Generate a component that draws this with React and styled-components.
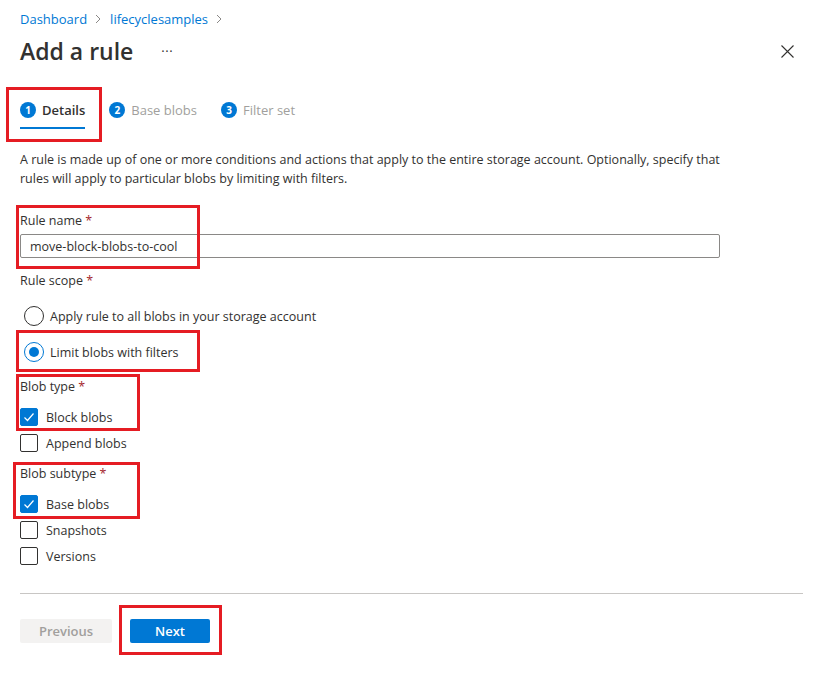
import React from 'react';
import styled, { createGlobalStyle } from 'styled-components';

const GlobalStyle = createGlobalStyle`
  body {
    margin: 0;
    background: #ffffff;
    font-family: "Open Sans", "Noto Sans", sans-serif;
    color: #323130;
  }
`;

const Page = styled.div`
  padding: 11px 20px 30px 20px;
  font-size: 12.5px;
`;

const Breadcrumb = styled.nav`
  display: flex;
  align-items: center;
  height: 16px;
  line-height: 16px;
  font-size: 13px;
`;

const Crumb = styled.a`
  color: #0078d4;
  text-decoration: none;
`;

const Separator = styled.span`
  display: flex;
  margin: 0 9px 0 8px;
`;

const TitleRow = styled.div`
  display: flex;
  align-items: center;
  margin-top: 8px;
  height: 32px;
`;

const Title = styled.h1`
  margin: 0;
  font-size: 23px;
  font-weight: 600;
  line-height: 32px;
`;

const More = styled.span`
  margin-left: 28px;
  font-size: 13px;
  letter-spacing: 0.5px;
`;

const CloseButton = styled.button`
  margin-left: auto;
  margin-right: 9px;
  padding: 0;
  border: none;
  background: none;
  display: flex;
`;

const Tabs = styled.div`
  display: flex;
  gap: 24px;
  margin-top: 31px;
`;

const Tab = styled.div`
  position: relative;
  display: flex;
  align-items: center;
  gap: 6px;
  padding: 2px 0 7px;
  line-height: 20px;
  font-size: 13px;
  font-weight: ${p => (p.$active ? 600 : 400)};
  color: ${p => (p.$active ? '#323130' : '#a19f9d')};
  border-bottom: 2px solid ${p => (p.$active ? '#0078d4' : 'transparent')};
`;

const Step = styled.span`
  width: 16px;
  height: 16px;
  border-radius: 50%;
  background: #0078d4;
  color: #ffffff;
  font-size: 10px;
  font-weight: 700;
  display: flex;
  align-items: center;
  justify-content: center;
  line-height: 1;
`;

const Description = styled.p`
  margin: 21px 0 0;
  line-height: 19px;
  max-width: 712px;
`;

const Marked = styled.div`
  position: relative;
  margin-top: ${p => p.$mt || 0}px;
`;

const Highlight = styled.div`
  position: absolute;
  box-sizing: border-box;
  border: 3px solid #e51c23;
  pointer-events: none;
  left: ${p => p.$x}px;
  top: ${p => p.$y}px;
  width: ${p => p.$w}px;
  height: ${p => p.$h}px;
`;

const Label = styled.div`
  line-height: 18px;
  margin-top: ${p => p.$mt || 0}px;
`;

const Required = styled.span`
  color: #a4262c;
`;

const TextInput = styled.input`
  display: block;
  box-sizing: border-box;
  margin-top: 4px;
  width: 700px;
  height: 24px;
  padding: 0 9px;
  border: 1px solid #8a8886;
  border-radius: 2px;
  font-family: inherit;
  font-size: 12.5px;
  color: #323130;
  outline: none;
`;

const RadioRow = styled.div`
  position: relative;
  display: flex;
  align-items: center;
  gap: 6px;
  height: 20px;
  margin-left: 4px;
  margin-top: ${p => p.$mt || 0}px;
`;

const RadioCircle = styled.span`
  box-sizing: border-box;
  width: 20px;
  height: 20px;
  border-radius: 50%;
  border: 1px solid ${p => (p.$checked ? '#0078d4' : '#323130')};
  display: flex;
  align-items: center;
  justify-content: center;
  &::after {
    content: '';
    width: 10px;
    height: 10px;
    border-radius: 50%;
    background: ${p => (p.$checked ? '#0078d4' : 'transparent')};
  }
`;

const CheckRow = styled.div`
  display: flex;
  align-items: center;
  gap: 8px;
  height: 18px;
  margin-top: ${p => p.$mt || 0}px;
`;

const Box = styled.span`
  box-sizing: border-box;
  width: 18px;
  height: 18px;
  border-radius: 2px;
  border: 1px solid ${p => (p.$checked ? '#0078d4' : '#323130')};
  background: ${p => (p.$checked ? '#0078d4' : '#ffffff')};
  display: flex;
  align-items: center;
  justify-content: center;
`;

const Divider = styled.hr`
  margin: 28px 0 0;
  border: none;
  border-top: 1px solid #c8c6c4;
`;

const Footer = styled.div`
  display: flex;
  gap: 18px;
  margin-top: 25px;
`;

const Button = styled.button`
  height: 24px;
  width: ${p => p.$w}px;
  border: none;
  border-radius: 2px;
  font-family: inherit;
  font-size: 13px;
  font-weight: 600;
  background: ${p => (p.$primary ? '#0078d4' : '#f3f2f1')};
  color: ${p => (p.$primary ? '#ffffff' : '#a19f9d')};
`;

const ButtonSlot = styled.div`
  position: relative;
  display: flex;
`;

const Chevron = () => (
  <Separator>
    <svg width="6" height="10" viewBox="0 0 6 10">
      <path d="M1 1l4 4-4 4" fill="none" stroke="#8a8886" strokeWidth="1" />
    </svg>
  </Separator>
);

const CloseIcon = () => (
  <svg width="13" height="13" viewBox="0 0 13 13">
    <path d="M0.5 0.5l12 12M12.5 0.5l-12 12" stroke="#323130" strokeWidth="1.1" />
  </svg>
);

const CheckMark = () => (
  <svg width="12" height="12" viewBox="0 0 12 12">
    <path d="M1.5 6.5l3 3 6-7" fill="none" stroke="#ffffff" strokeWidth="1.2" />
  </svg>
);

function Checkbox({ checked, label, mt }) {
  return (
    <CheckRow $mt={mt}>
      <Box $checked={checked}>{checked && <CheckMark />}</Box>
      <span>{label}</span>
    </CheckRow>
  );
}

export default function App() {
  return (
    <Page>
      <GlobalStyle />
      <Breadcrumb>
        <Crumb>Dashboard</Crumb>
        <Chevron />
        <Crumb>lifecyclesamples</Crumb>
        <Chevron />
      </Breadcrumb>

      <TitleRow>
        <Title>Add a rule</Title>
        <More>···</More>
        <CloseButton aria-label="Close">
          <CloseIcon />
        </CloseButton>
      </TitleRow>

      <Tabs>
        <Tab $active>
          <Step>1</Step>
          Details
          <Highlight $x={-14} $y={-11} $w={96} $h={55} />
        </Tab>
        <Tab>
          <Step>2</Step>
          Base blobs
        </Tab>
        <Tab>
          <Step>3</Step>
          Filter set
        </Tab>
      </Tabs>

      <Description>
        A rule is made up of one or more conditions and actions that apply to the entire storage account. Optionally, specify that rules will apply to particular blobs by limiting with filters.
      </Description>

      <Marked $mt={24}>
        <Label>
          Rule name <Required>*</Required>
        </Label>
        <TextInput defaultValue="move-block-blobs-to-cool" />
        <Highlight $x={-4} $y={-7} $w={184} $h={64} />
      </Marked>

      <Label $mt={14}>
        Rule scope <Required>*</Required>
      </Label>
      <RadioRow $mt={16}>
        <RadioCircle />
        <span>Apply rule to all blobs in your storage account</span>
      </RadioRow>
      <RadioRow $mt={16}>
        <RadioCircle $checked />
        <span>Limit blobs with filters</span>
        <Highlight $x={-8} $y={-12} $w={184} $h={42} />
      </RadioRow>

      <Marked $mt={16}>
        <Label>
          Blob type <Required>*</Required>
        </Label>
        <Checkbox checked label="Block blobs" mt={12} />
        <Highlight $x={-4} $y={-4} $w={124} $h={57} />
      </Marked>
      <Checkbox label="Append blobs" mt={8} />

      <Marked $mt={13}>
        <Label>
          Blob subtype <Required>*</Required>
        </Label>
        <Checkbox checked label="Base blobs" mt={12} />
        <Highlight $x={-7} $y={-3} $w={127} $h={57} />
      </Marked>
      <Checkbox label="Snapshots" mt={8} />
      <Checkbox label="Versions" mt={8} />

      <Divider />

      <Footer>
        <Button $w={92} disabled>Previous</Button>
        <ButtonSlot>
          <Button $w={80} $primary>Next</Button>
          <Highlight $x={-11} $y={-14} $w={103} $h={50} />
        </ButtonSlot>
      </Footer>
    </Page>
  );
}
